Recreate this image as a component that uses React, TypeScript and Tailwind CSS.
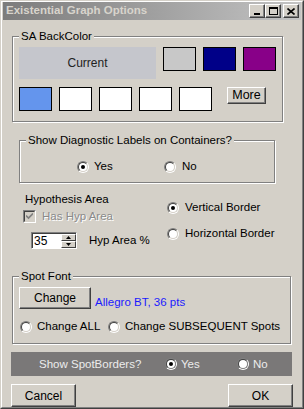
import React from "react";

const FONT = "font-['Liberation_Sans',Arial,sans-serif]";

function Radio({ checked = false, light = false }: { checked?: boolean; light?: boolean }) {
  return (
    <div className="w-[12px] h-[12px] shrink-0 rounded-full border border-t-[#808080] border-l-[#808080] border-r-white border-b-white">
      <div
        className={`w-full h-full rounded-full border border-t-[#404040] border-l-[#404040] ${
          light ? "border-r-[#808080] border-b-[#808080]" : "border-r-[#d4d0c8] border-b-[#d4d0c8]"
        } bg-white flex items-center justify-center`}
      >
        {checked && <div className="w-[4px] h-[4px] rounded-full bg-black" />}
      </div>
    </div>
  );
}

function RadioLabel({ label, checked, gap = "gap-[5px]", light = false, className = "" }: { label: string; checked?: boolean; gap?: string; light?: boolean; className?: string }) {
  return (
    <div className={`flex items-center whitespace-nowrap shrink-0 ${gap} ${className}`}>
      <Radio checked={checked} light={light} />
      <span className={`leading-[13px] ${light ? "text-[#ececec]" : "text-black"}`}>{label}</span>
    </div>
  );
}

function Btn({ children, className = "" }: { children: React.ReactNode; className?: string }) {
  return (
    <div
      className={`shrink-0 flex items-center justify-center bg-[#d4d0c8] border border-t-white border-l-white border-r-[#404040] border-b-[#404040] shadow-[inset_-1px_-1px_0_#808080] text-black ${className}`}
    >
      {children}
    </div>
  );
}

function Swatch({ color }: { color: string }) {
  return <div className={`w-[33px] h-[24px] border border-black ${color}`} />;
}

function Group({ title, className = "", children }: { title: string; className?: string; children: React.ReactNode }) {
  return (
    <fieldset className={`shrink-0 border border-[#808080] shadow-[inset_1px_1px_0_#fff,1px_1px_0_#fff] ${className}`}>
      <legend className="ml-[6px] px-[2px] bg-[#d4d0c8] leading-[13px] text-black whitespace-nowrap">{title}</legend>
      {children}
    </fieldset>
  );
}

function TitleButton({ children }: { children: React.ReactNode }) {
  return (
    <div className="w-[16px] h-[14px] bg-[#d4d0c8] border border-t-white border-l-white border-r-[#404040] border-b-[#404040] shadow-[inset_-1px_-1px_0_#808080] flex items-center justify-center">
      {children}
    </div>
  );
}

export default function App() {
  return (
    <div className={`w-[304px] h-[409px] bg-[#d4d0c8] border border-t-[#d4d0c8] border-l-[#d4d0c8] border-r-[#404040] border-b-[#404040] ${FONT} text-[11.5px]`}>
      <div className="w-full h-full border border-t-white border-l-white border-r-[#808080] border-b-[#808080] flex flex-col">
        {/* title bar */}
        <div className="mx-[1px] h-[18px] shrink-0 bg-gradient-to-r from-[#7c7c7c] to-[#c4c4c4] flex items-center pl-[3px] pr-[2px]">
          <span className="font-bold text-[11.5px] text-[#d8d4cc] leading-none flex-1">Existential Graph Options</span>
          <div className="flex items-center">
            <TitleButton>
              <div className="w-[6px] h-[2px] bg-black mt-[6px]" />
            </TitleButton>
            <TitleButton>
              <div className="w-[9px] h-[8px] border border-black border-t-2" />
            </TitleButton>
            <div className="w-[2px]" />
            <TitleButton>
              <svg width="8" height="7" viewBox="0 0 8 7">
                <path d="M0.5 0.5 L7.5 6.5 M7.5 0.5 L0.5 6.5" stroke="black" strokeWidth="1.6" />
              </svg>
            </TitleButton>
          </div>
        </div>

        {/* SA BackColor */}
        <Group title="SA BackColor" className="mt-[10px] ml-[10px] w-[271px]">
          <div className="pt-[4px] pb-[10px] pl-[6px] flex flex-col">
            <div className="flex items-start">
              <div className="w-[137px] h-[32px] bg-[#c5c6cc] flex items-center justify-center text-[12px] text-[#222]">
                Current
              </div>
              <div className="ml-[7px] flex gap-[7px]">
                <Swatch color="bg-[#c8c8c8]" />
                <Swatch color="bg-[#000088]" />
                <Swatch color="bg-[#880088]" />
              </div>
            </div>
            <div className="mt-[8px] flex items-start">
              <div className="flex gap-[7px]">
                <Swatch color="bg-[#6495ed]" />
                <Swatch color="bg-white" />
                <Swatch color="bg-white" />
                <Swatch color="bg-white" />
                <Swatch color="bg-white" />
              </div>
              <Btn className="ml-[15px] w-[39px] h-[17px] border-black text-[12.5px]">More</Btn>
            </div>
          </div>
        </Group>

        {/* Diagnostic labels */}
        <Group title="Show Diagnostic Labels on Containers?" className="mt-[12px] ml-[17px] w-[256px]">
          <div className="pt-[13px] pb-[9px] pl-[57px] flex items-center">
            <RadioLabel label="Yes" checked className="w-[87px]" />
            <RadioLabel label="No" gap="gap-[6px]" />
          </div>
        </Group>

        {/* Hypothesis area */}
        <div className="shrink-0 mt-[10px] flex">
          <div className="ml-[21px] w-[144px] flex flex-col">
            <span className="ml-[2px] leading-[13px]">Hypothesis Area</span>
            <div className="mt-[4px] flex items-center gap-[6px]">
              <div className="w-[13px] h-[13px] border border-t-[#808080] border-l-[#808080] border-r-white border-b-white">
                <div className="w-full h-full border border-t-[#404040] border-l-[#404040] border-r-[#d4d0c8] border-b-[#d4d0c8] bg-[#d4d0c8] flex items-center justify-center">
                  <svg width="7" height="7" viewBox="0 0 7 7">
                    <path d="M0 2.5 L2.5 5 L7 0.5" stroke="#808080" strokeWidth="1.7" fill="none" />
                  </svg>
                </div>
              </div>
              <span className="leading-[13px] text-[#8a8a8a] [text-shadow:1px_1px_0_#fff]">Has Hyp Area</span>
            </div>
            <div className="mt-[9px] ml-[8px] flex items-center">
              <div className="flex h-[17px] border border-t-[#808080] border-l-[#808080] border-r-white border-b-white">
                <div className="w-[29px] h-full bg-white border-t border-l border-t-[#404040] border-l-[#404040] pl-[1px] leading-[14px] text-[12px]">
                  35
                </div>
                <div className="w-[15px] flex flex-col bg-white border-t border-t-[#404040]">
                  <div className="h-[7px] bg-[#d4d0c8] border border-t-white border-l-white border-r-[#404040] border-b-[#404040] flex items-center justify-center">
                    <svg width="5" height="3" viewBox="0 0 5 3"><path d="M2.5 0 L5 3 L0 3 Z" fill="black" /></svg>
                  </div>
                  <div className="h-[8px] bg-[#d4d0c8] border border-t-white border-l-white border-r-[#404040] border-b-[#404040] flex items-center justify-center">
                    <svg width="5" height="3" viewBox="0 0 5 3"><path d="M0 0 L5 0 L2.5 3 Z" fill="black" /></svg>
                  </div>
                </div>
              </div>
              <span className="ml-[12px] leading-[13px] whitespace-nowrap">Hyp Area %</span>
            </div>
          </div>
          <div className="flex flex-col pt-[8px]">
            <RadioLabel label="Vertical Border" checked gap="gap-[6px]" />
            <div className="mt-[13px]">
              <RadioLabel label="Horizontal Border" gap="gap-[6px]" />
            </div>
          </div>
        </div>

        {/* Spot Font */}
        <Group title="Spot Font" className="mt-[21px] ml-[10px] w-[279px]">
          <div className="pt-[4px] pb-[10px] pl-[6px] flex flex-col">
            <div className="flex items-end">
              <Btn className="w-[72px] h-[22px] text-[12px]">Change</Btn>
              <span className="ml-[4px] leading-[14px] text-[#1a1aff] whitespace-nowrap">Allegro BT, 36 pts</span>
            </div>
            <div className="mt-[11px] ml-[1px] flex items-center">
              <RadioLabel label="Change ALL" className="w-[88px]" />
              <RadioLabel label="Change SUBSEQUENT Spots" />
            </div>
          </div>
        </Group>

        {/* Spot borders bar */}
        <div className="shrink-0 mt-[8px] ml-[9px] w-[281px] h-[24px] bg-[#7a7878] flex items-center">
          <span className="ml-[28px] w-[126px] shrink-0 text-[#ececec] leading-[13px] whitespace-nowrap">Show SpotBorders?</span>
          <RadioLabel label="Yes" checked light gap="gap-[4px]" className="w-[72px]" />
          <RadioLabel label="No" light gap="gap-[4px]" />
        </div>

        {/* footer buttons */}
        <div className="shrink-0 mt-[8px] mx-[9px] flex justify-between text-[12px]">
          <Btn className="w-[65px] h-[23px]">Cancel</Btn>
          <Btn className="w-[65px] h-[23px]">OK</Btn>
        </div>
      </div>
    </div>
  );
}
